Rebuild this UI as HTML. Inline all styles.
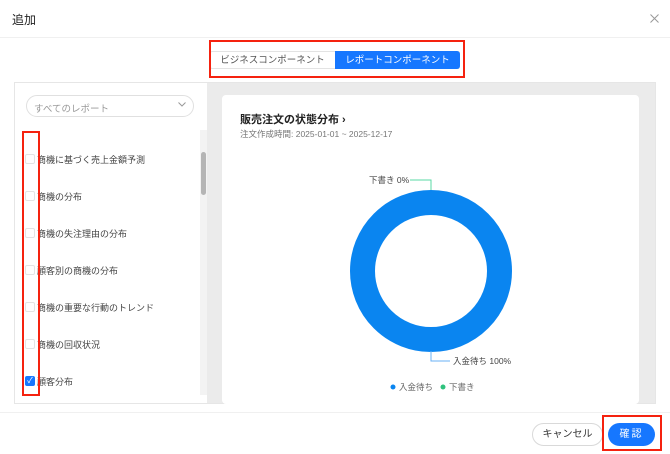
<!DOCTYPE html>
<html><head><meta charset="utf-8"><style>
*{margin:0;padding:0;box-sizing:border-box}
body{width:670px;height:454px;background:#fff;font-family:"Liberation Sans","Noto Sans CJK JP",sans-serif;position:relative;overflow:hidden;color:#333}
.a{position:absolute}
.item{position:absolute;left:25px;font-size:9px;color:#444;display:flex;align-items:center;height:12px}
.cb{width:10px;height:10px;border:1px solid #e3e3e3;border-radius:2px;margin-right:2px;background:#fff}
</style></head><body>
<div class="a" style="left:12px;top:11px;font-size:12px;color:#222">追加</div>
<svg class="a" style="left:650px;top:14px" width="9" height="9"><path d="M0.5 0.5L8.5 8.5M8.5 0.5L0.5 8.5" stroke="#999" stroke-width="1"/></svg>
<div class="a" style="left:0;top:37px;width:670px;height:1px;background:#f0f0f0"></div>
<!-- tabs -->
<div class="a" style="left:210px;top:51px;width:250px;height:18px;border:1px solid #e3e3e3;border-radius:2px;background:#fff"></div>
<div class="a" style="left:210px;top:53px;width:125px;height:16px;line-height:16px;text-align:center;font-size:9.5px;color:#555">ビジネスコンポーネント</div>
<div class="a" style="left:335px;top:51px;width:125px;height:18px;background:#1677ff;border-radius:0 3px 3px 0"></div>
<div class="a" style="left:335px;top:53px;width:125px;height:16px;color:#fff;font-size:9.5px;text-align:center;line-height:16px">レポートコンポーネント</div>
<div class="a" style="left:209px;top:40px;width:256px;height:38px;border:2px solid #f5220f"></div>
<!-- panel -->
<div class="a" style="left:14px;top:82px;width:642px;height:322px;border:1px solid #e6e6e6;background:#ebebeb"></div>
<div class="a" style="left:15px;top:83px;width:192px;height:320px;background:#fff"></div>
<div class="a" style="left:26px;top:95px;width:168px;height:22px;border:1px solid #e0e0e0;border-radius:11px;font-size:9.5px;color:#999;padding:5px 0 0 7px">すべてのレポート</div>
<svg class="a" style="left:178px;top:102px" width="8" height="5"><path d="M0.5 0.5L4 4L7.5 0.5" fill="none" stroke="#999"/></svg>
<div class="a" style="left:200px;top:130px;width:7px;height:265px;background:#f3f3f3"></div>
<div class="a" style="left:201px;top:152px;width:5px;height:43px;background:#b5b5b5;border-radius:3px"></div>
<div class="item" style="top:153px"><span class="cb"></span>商機に基づく売上金額予測</div>
<div class="item" style="top:190px"><span class="cb"></span>商機の分布</div>
<div class="item" style="top:227px"><span class="cb"></span>商機の失注理由の分布</div>
<div class="item" style="top:264px"><span class="cb"></span>顧客別の商機の分布</div>
<div class="item" style="top:301px"><span class="cb"></span>商機の重要な行動のトレンド</div>
<div class="item" style="top:338px"><span class="cb"></span>商機の回収状況</div>
<div class="item" style="top:375px"><span class="cb" style="background:#1677ff;border-color:#1677ff;color:#fff;font-size:8px;line-height:8px;text-align:center">✓</span>顧客分布</div>
<div class="a" style="left:22px;top:131px;width:18px;height:265px;border:2px solid #f5220f"></div>
<!-- card -->
<div class="a" style="left:222px;top:95px;width:417px;height:309px;background:#fff;border-radius:4px"></div>
<div class="a" style="left:240px;top:111px;font-size:11px;font-weight:bold;color:#222">販売注文の状態分布 ›</div>
<div class="a" style="left:240px;top:128px;font-size:8.5px;color:#777">注文作成時間: 2025-01-01 ~ 2025-12-17</div>
<svg class="a" style="left:222px;top:160px" width="417" height="240">
<circle cx="209" cy="111" r="68.5" fill="none" stroke="#0a85f0" stroke-width="25"/>
<polyline points="188,20 209,20 209,30" fill="none" stroke="#5ad8a6" stroke-width="1"/>
<polyline points="209,191 209,201 228,201" fill="none" stroke="#6ab0f5" stroke-width="1"/>
<text x="147" y="23" font-size="8.5" fill="#444">下書き 0%</text>
<text x="231" y="204" font-size="8.5" fill="#444">入金待ち 100%</text>
<circle cx="171" cy="227" r="2.5" fill="#0a85f0"/><text x="177" y="230" font-size="8.5" fill="#666">入金待ち</text>
<circle cx="221" cy="227" r="2.5" fill="#2fc27d"/><text x="227" y="230" font-size="8.5" fill="#666">下書き</text>
</svg>
<!-- footer -->
<div class="a" style="left:0;top:412px;width:670px;height:1px;background:#f0f0f0"></div>
<div class="a" style="left:532px;top:423px;width:71px;height:23px;border:1px solid #d9d9d9;border-radius:12px;font-size:10px;color:#333;text-align:center;line-height:21px">キャンセル</div>
<div class="a" style="left:608px;top:423px;width:47px;height:23px;background:#1677ff;border-radius:12px;font-size:10px;color:#fff;text-align:center;line-height:23px;letter-spacing:2px">確認</div>
<div class="a" style="left:602px;top:415px;width:60px;height:36px;border:2px solid #f5220f"></div>
</body></html>
